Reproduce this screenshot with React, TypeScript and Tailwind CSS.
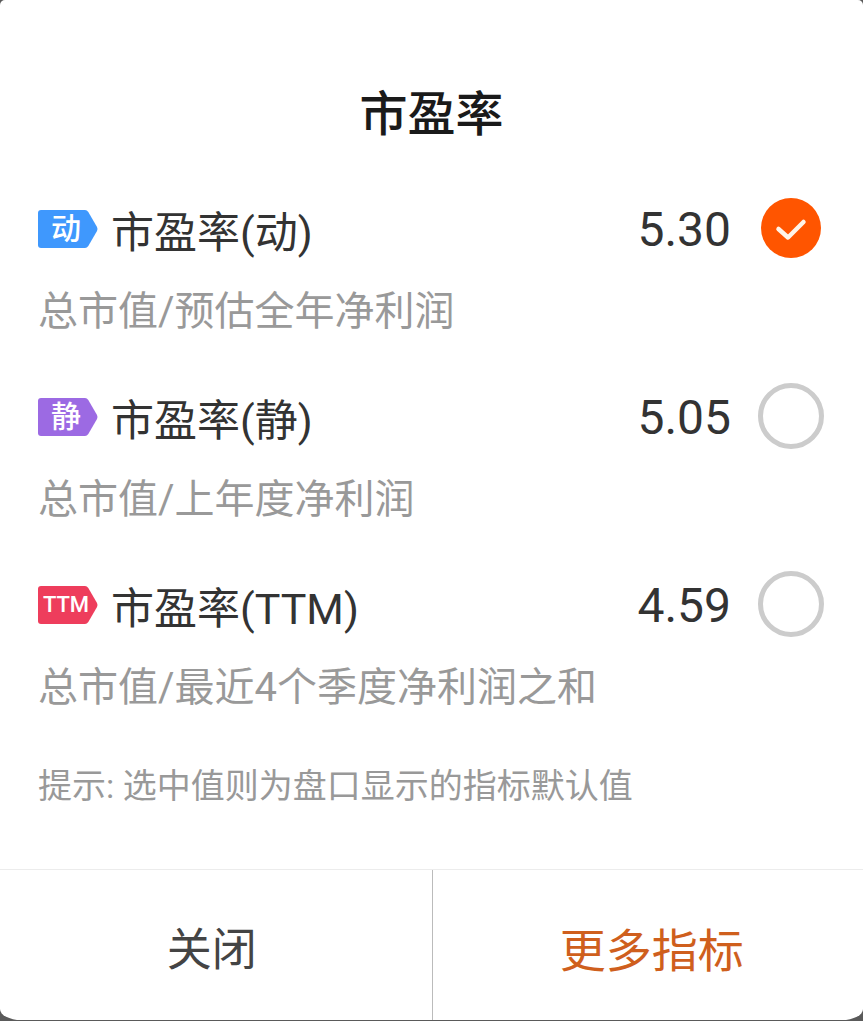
import React, { useState } from 'react';

interface Indicator {
  id: string;
  tag: string;
  label: string;
  value: string;
  desc: string;
  tagColor: string;
  tagText: string;
}

const INDICATORS: Indicator[] = [
  { id: 'dynamic', tag: '动', label: '市盈率(动)', value: '5.30', desc: '总市值/预估全年净利润', tagColor: 'text-[#3f98fd]', tagText: 'text-[30px]' },
  { id: 'static', tag: '静', label: '市盈率(静)', value: '5.05', desc: '总市值/上年度净利润', tagColor: 'text-[#9c6ae3]', tagText: 'text-[30px]' },
  { id: 'ttm', tag: 'TTM', label: '市盈率(TTM)', value: '4.59', desc: '总市值/最近4个季度净利润之和', tagColor: 'text-[#ee3d5c]', tagText: 'text-[22px]' },
];

const Tag: React.FC<{ item: Indicator }> = ({ item }) => (
  <span className="grid h-[38px] w-[60px] shrink-0 place-items-center">
    <svg viewBox="0 0 60 38" className={`col-start-1 row-start-1 h-[38px] w-[60px] ${item.tagColor}`} aria-hidden="true">
      <path d="M3 0H47Q49 0 50.3 2L59 17Q60 19 59 21L50.3 36Q49 38 47 38H3Q0 38 0 35V3Q0 0 3 0Z" fill="currentColor" />
    </svg>
    <span className={`z-10 col-start-1 row-start-1 pr-1 font-medium leading-[40px] text-white ${item.tagText}`}>{item.tag}</span>
  </span>
);

interface RowProps {
  item: Indicator;
  checked: boolean;
  onSelect: () => void;
}

const IndicatorRow: React.FC<RowProps> = ({ item, checked, onSelect }) => (
  <label htmlFor={item.id} className="block cursor-pointer">
    <span className="flex h-[66px] items-center">
      <Tag item={item} />
      <span className="ml-[13px] pt-[10px] text-[43px] leading-[60px] text-[#333333]">{item.label}</span>
      <span className="ml-auto pt-1 text-[48px] leading-[60px] text-[#333333]">{item.value}</span>
      <span className="ml-6 grid size-[72px] shrink-0 place-items-center">
        <input
          id={item.id}
          type="radio"
          name="indicator"
          checked={checked}
          onChange={onSelect}
          className="col-start-1 row-start-1 size-[66px] appearance-none rounded-full border-[5px] border-[#cccccc] checked:size-[60px] checked:border-0 checked:bg-[#ff5500]"
        />
        {checked && (
          <svg viewBox="0 0 60 60" className="pointer-events-none z-10 col-start-1 row-start-1 size-[60px]" fill="none" aria-hidden="true">
            <path d="M17.5 31L27 39.5L42.5 24" stroke="#fff4e8" strokeWidth="4.5" strokeLinecap="round" strokeLinejoin="round" />
          </svg>
        )}
      </span>
    </span>
    <span className="mt-[21px] block text-[40px] leading-[60px] text-[#999999]">{item.desc}</span>
  </label>
);

export default function App() {
  const [selected, setSelected] = useState('dynamic');

  return (
    <div className="flex min-h-screen flex-col bg-[#5a5a5a] pb-px font-['Roboto','Noto_Sans_CJK_SC',sans-serif]">
      <main className="flex flex-1 flex-col overflow-hidden rounded-t-[5px] bg-white [border-bottom-left-radius:21px_11px] [border-bottom-right-radius:21px_11px]">
        <h1 className="pt-[81px] text-center text-[48px] font-medium leading-[68px] text-[#1a1a1a]">市盈率</h1>

        <div className="mt-[46px] flex flex-col gap-[41px] pr-9 pl-[38px]">
          {INDICATORS.map((item) => (
            <IndicatorRow key={item.id} item={item} checked={selected === item.id} onSelect={() => setSelected(item.id)} />
          ))}
        </div>

        <p className="mt-[43px] mb-[58px] pr-9 pl-[38px] text-[34px] leading-[50px] text-[#999999]">提示: 选中值则为盘口显示的指标默认值</p>

        <div className="mt-auto grid h-[151px] grid-cols-2 border-t border-[#ececec]">
          <button type="button" className="pt-3 pr-2 text-[45px] text-[#444444]">关闭</button>
          <button type="button" className="border-l border-[#bbbbbb] pt-3 pl-2 text-[46px] text-[#cf5f1d]">更多指标</button>
        </div>
      </main>
    </div>
  );
}
